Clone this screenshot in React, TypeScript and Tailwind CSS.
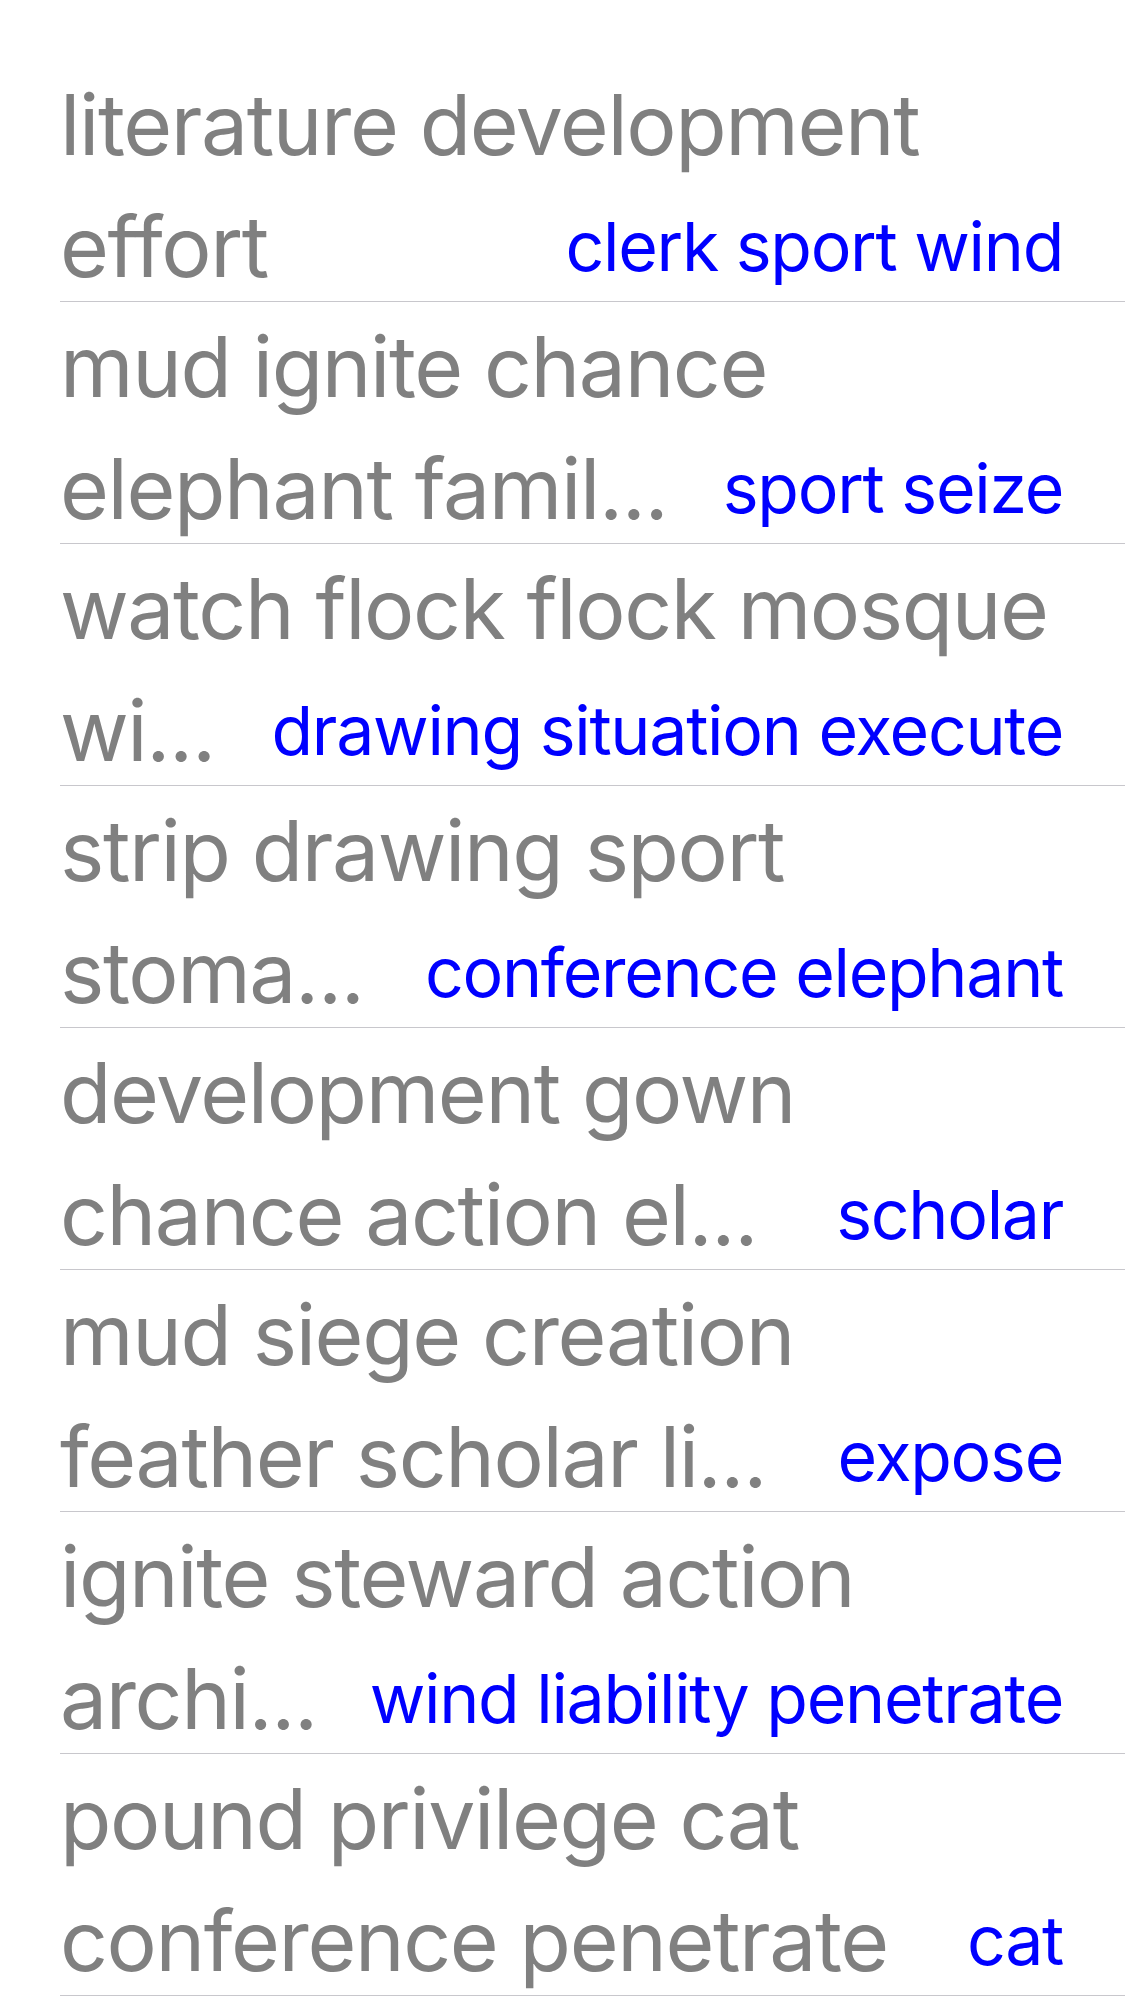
type Row = {
  first: string;
  second: string;
  detail: string;
};

const rows: Row[] = [
  { first: "literature development", second: "effort", detail: "clerk sport wind" },
  { first: "mud ignite chance", second: "elephant famil...", detail: "sport seize" },
  { first: "watch flock flock mosque", second: "wi...", detail: "drawing situation execute" },
  { first: "strip drawing sport", second: "stoma...", detail: "conference elephant" },
  { first: "development gown", second: "chance action el...", detail: "scholar" },
  { first: "mud siege creation", second: "feather scholar li...", detail: "expose" },
  { first: "ignite steward action", second: "archi...", detail: "wind liability penetrate" },
  { first: "pound privilege cat", second: "conference penetrate", detail: "cat" },
];

function ListRow({ row }: { row: Row }) {
  return (
    <div className="h-[242px] border-b border-[#c8c7cc] flex flex-col pr-[62px] overflow-hidden">
      <div className="pt-[4px] text-[84px] leading-[122px] tracking-[-1.4px] text-[#808080] whitespace-nowrap">
        {row.first}
      </div>
      <div className="flex items-start justify-between gap-[20px]">
        <span className="text-[84px] leading-[122px] tracking-[-1.4px] text-[#808080] whitespace-nowrap">
          {row.second}
        </span>
        <span className="text-[68px] leading-[120px] tracking-[-1.3px] text-[#0000ff] whitespace-nowrap">
          {row.detail}
        </span>
      </div>
    </div>
  );
}

export default function App() {
  return (
    <div
      className="w-[1125px] h-[2001px] bg-white pt-[60px] pl-[60px] overflow-hidden"
      style={{ fontFamily: 'Inter, "Liberation Sans", sans-serif' }}
    >
      {rows.map((row) => (
        <ListRow key={row.first} row={row} />
      ))}
    </div>
  );
}
